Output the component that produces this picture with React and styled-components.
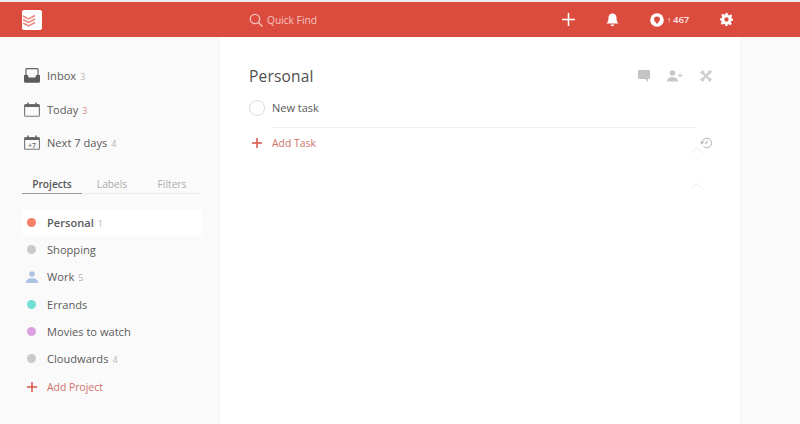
import React from 'react'
import styled, { createGlobalStyle } from 'styled-components'

const Global = createGlobalStyle`
  html, body { margin: 0; padding: 0; background: #fafafa; }
  body { font-family: "Open Sans", "Liberation Sans", sans-serif; color: #4a4a4a; }
`

const Page = styled.div`
  width: 800px;
  height: 424px;
  overflow: hidden;
  display: flex;
  flex-direction: column;
  background: #fafafa;
  border-top: 2px solid #ececec;
  box-sizing: border-box;
`

const TopBar = styled.header`
  height: 35px;
  flex: none;
  background: #db4c3f;
  display: flex;
  align-items: center;
`

const Logo = styled.div`
  width: 20px;
  height: 20px;
  margin-left: 22px;
  background: #fff;
  border-radius: 2px;
  display: flex;
  svg { display: block; }
`

const Search = styled.div`
  margin-left: 207px;
  display: flex;
  align-items: center;
  gap: 4px;
  color: #f6c4bf;
  font-size: 10.2px;
  width: 313px;
`

const HeaderIcons = styled.div`
  display: flex;
  align-items: center;
`

const HeaderSlot = styled.div`
  display: flex;
  align-items: center;
  width: ${p => p.$w}px;
  color: #fff;
`

const Karma = styled.span`
  font-size: 9.5px;
  font-weight: 600;
  color: #fbe7e5;
  margin-left: 3px;
  white-space: nowrap;
`

const KarmaArrow = styled.span`
  font-size: 8px;
  font-weight: 400;
  margin-right: 2px;
`

const Body = styled.div`
  flex: 1;
  display: flex;
  min-height: 0;
`

const Sidebar = styled.aside`
  width: 219px;
  flex: none;
  box-sizing: border-box;
  padding: 22px 17px 0 22px;
  background: #fafafa;
`

const FilterRow = styled.div`
  height: 33.5px;
  display: flex;
  align-items: center;
  font-size: 11.1px;
  color: #5a5a5a;
`

const IconBox = styled.span`
  width: 25px;
  flex: none;
  display: flex;
  padding-left: 2px;
  box-sizing: border-box;
  svg { display: block; }
`

const Count = styled.span`
  font-size: 9px;
  margin-left: 4px;
  margin-top: 2px;
  font-weight: 400;
  color: ${p => (p.$red ? '#d98a84' : '#b5b5b5')};
`

const Tabs = styled.div`
  display: flex;
  margin: 17px 0 15px;
  height: 16px;
  border-bottom: 1px solid #ececec;
`

const Tab = styled.div`
  width: 60px;
  font-size: 10.2px;
  line-height: 15px;
  text-align: center;
  color: ${p => (p.$active ? '#555' : '#aaa')};
  font-weight: ${p => (p.$active ? 600 : 400)};
  border-bottom: ${p => (p.$active ? '1px solid #999' : '0')};
  height: 16px;
`

const ProjectRow = styled.div`
  height: 27.3px;
  display: flex;
  align-items: center;
  font-size: 11.1px;
  color: #5a5a5a;
  border-radius: 3px;
  background: ${p => (p.$active ? '#fff' : 'transparent')};
  font-weight: ${p => (p.$active ? 600 : 400)};
`

const DotBox = styled.span`
  width: 25px;
  flex: none;
  display: flex;
  justify-content: center;
  padding-right: 6px;
  box-sizing: border-box;
`

const Dot = styled.span`
  width: 9px;
  height: 9px;
  border-radius: 50%;
  background: ${p => p.$color};
`

const AddLine = styled.div`
  height: 29px;
  display: flex;
  align-items: center;
  font-size: 10.4px;
  color: #d0716a;
`

const Main = styled.main`
  width: 521px;
  flex: none;
  background: #fff;
  box-sizing: border-box;
  padding: 27px 28px 0 29px;
  border-left: 1px solid #f1f1f1;
  position: relative;
`

const TitleRow = styled.div`
  display: flex;
  align-items: center;
  justify-content: space-between;
  height: 24px;
`

const Title = styled.h1`
  margin: 0;
  font-size: 15.5px;
  font-weight: 400;
  color: #4f4f4f;
  letter-spacing: 0.2px;
`

const TitleIcons = styled.div`
  display: flex;
  align-items: center;
  gap: 17px;
  svg { display: block; }
`

const TaskRow = styled.div`
  height: 39px;
  display: flex;
  align-items: center;
  font-size: 11px;
  color: #5a5a5a;
`

const Check = styled.span`
  width: 14px;
  height: 14px;
  border: 1px solid #dcdcdc;
  border-radius: 50%;
  margin-right: 7px;
  flex: none;
`

const Divider = styled.div`
  height: 1px;
  background: #f0f0f0;
  margin: 0 16px 0 23px;
`

const AddTaskRow = styled.div`
  height: 30px;
  display: flex;
  align-items: center;
  justify-content: space-between;
  font-size: 10.4px;
  color: #d0716a;
`

const AddLabel = styled.div`
  display: flex;
  align-items: center;
  svg { display: block; }
`

const PlusBox = styled.span`
  width: ${p => p.$w}px;
  padding-left: ${p => p.$pad}px;
  box-sizing: border-box;
  flex: none;
  display: flex;
`

const Chevron = styled.svg`
  position: absolute;
  left: 470px;
  top: ${p => p.$top}px;
`

const Rail = styled.div`
  flex: 1;
  background: #fafafa;
  border-left: 1px solid #f3f3f3;
`

const calendar = (
  <>
    <rect x=".6" y="2.5" width="14.8" height="11.8" rx="1" fill="none" stroke="#777" strokeWidth="1.1" />
    <path d="M.6 2.5h14.8v2.5H.6z" fill="#666" />
    <path d="M4 .5v3M12 .5v3" stroke="#666" strokeWidth="1.5" />
  </>
)

const filters = [
  {
    name: 'Inbox',
    count: 3,
    icon: (
      <svg width="16" height="15" viewBox="0 0 16 15">
        <path d="M2 7V1.200a.6.6 0 0 1 .6-.6h10.800a.6.6 0 0 1 .6.6V7" fill="none" stroke="#666" strokeWidth="1.2" />
        <path d="M0 7h3.500c.5 0 .8 2.500 1.500 2.500h6c.7 0 1-2.500 1.500-2.500H16v6.300a1.500 1.500 0 0 1-1.500 1.500h-13A1.500 1.500 0 0 1 0 13.300z" fill="#5c5c5c" />
      </svg>
    ),
  },
  {
    name: 'Today',
    count: 3,
    red: true,
    icon: <svg width="16" height="15" viewBox="0 0 16 15">{calendar}</svg>,
  },
  {
    name: 'Next 7 days',
    count: 4,
    icon: (
      <svg width="16" height="15" viewBox="0 0 16 15">
        {calendar}
        <text x="8" y="12.5" fontSize="7" fontWeight="600" textAnchor="middle" fill="#666">+7</text>
      </svg>
    ),
  },
]

const projects = [
  { name: 'Personal', color: '#f58069', count: 1, active: true },
  { name: 'Shopping', color: '#cacaca' },
  { name: 'Work', count: 5, person: true },
  { name: 'Errands', color: '#6fe0d2' },
  { name: 'Movies to watch', color: '#dc9fe0' },
  { name: 'Cloudwards', color: '#cacaca', count: 4 },
]

const Plus = ({ size = 10, color = '#d9534a', width = 1.5 }) => (
  <svg width={size} height={size} viewBox="0 0 10 10">
    <path d="M5 0v10M0 5h10" stroke={color} strokeWidth={width} />
  </svg>
)

const App = () => (
  <Page>
    <Global />
    <TopBar>
      <Logo>
        <svg width="20" height="20" viewBox="0 0 20 20">
          <g fill="none" stroke="#e9877d" strokeWidth="1.5">
            <path d="M1 6l5.500 3L13 5.500" />
            <path d="M1 9.500l5.500 3L13 9" />
            <path d="M1 13l5.500 3L13 12.500" />
          </g>
        </svg>
      </Logo>
      <Search>
        <svg width="14" height="14" viewBox="0 0 14 14">
          <circle cx="6" cy="6" r="4.7" fill="none" stroke="#f6c4bf" strokeWidth="1.3" />
          <path d="M9.500 9.500L13.500 13.500" stroke="#f6c4bf" strokeWidth="1.4" />
        </svg>
        Quick Find
      </Search>
      <HeaderIcons>
        <HeaderSlot $w={44}>
          <Plus size={13} color="#fff" width={1.2} />
        </HeaderSlot>
        <HeaderSlot $w={44}>
          <svg width="13" height="14" viewBox="0 0 13 14">
            <path d="M6.500 0.500c-2.500 0-4 1.800-4 4.200 0 3-.7 4.300-2 5.800h12c-1.300-1.500-2-2.800-2-5.800 0-2.400-1.500-4.200-4-4.200z" fill="#fff" />
            <path d="M4.700 11.500h3.600a1.800 1.800 0 0 1-3.600 0z" fill="#fff" />
          </svg>
        </HeaderSlot>
        <HeaderSlot $w={70}>
          <svg width="14" height="14" viewBox="0 0 14 14">
            <circle cx="7" cy="7" r="6.8" fill="#fff" />
            <path d="M7 3.500c1.800 0 3 1 3 2.600 0 1.500-1.600 3.200-3 4.900-1.400-1.700-3-3.400-3-4.900 0-1.600 1.200-2.600 3-2.600z" fill="#db4c3f" />
          </svg>
          <Karma><KarmaArrow>↑</KarmaArrow>467</Karma>
        </HeaderSlot>
        <HeaderSlot $w={20}>
          <svg width="13" height="13" viewBox="0 0 24 24">
            <path fill="#fff" fillRule="evenodd" d="M10 0h4l.7 3.400 2.300 1 2.900-1.900 2.800 2.800-1.900 2.900 1 2.300L24 10v4l-3.200.7-1 2.300 1.900 2.900-2.800 2.800-2.900-1.900-2.300 1L14 24h-4l-.7-3.200-2.300-1-2.900 1.900-2.800-2.800 1.900-2.900-1-2.300L0 14v-4l3.200-.7 1-2.300-1.900-2.900 2.800-2.800 2.900 1.900 2.300-1zM12 8a4 4 0 1 0 0 8 4 4 0 0 0 0-8z" />
          </svg>
        </HeaderSlot>
      </HeaderIcons>
    </TopBar>
    <Body>
      <Sidebar>
        {filters.map(f => (
          <FilterRow key={f.name}>
            <IconBox>{f.icon}</IconBox>
            {f.name}
            <Count $red={f.red}>{f.count}</Count>
          </FilterRow>
        ))}
        <Tabs>
          <Tab $active>Projects</Tab>
          <Tab>Labels</Tab>
          <Tab>Filters</Tab>
        </Tabs>
        {projects.map(p => (
          <ProjectRow key={p.name} $active={p.active}>
            <DotBox>
              {p.person ? (
                <svg width="12" height="12" viewBox="0 0 12 12">
                  <circle cx="6" cy="3" r="2.8" fill="#a9c4e2" />
                  <path d="M0 12c0-3 2-4.800 6-4.800s6 1.800 6 4.800z" fill="#a9c4e2" />
                </svg>
              ) : (
                <Dot $color={p.color} />
              )}
            </DotBox>
            {p.name}
            {p.count && <Count>{p.count}</Count>}
          </ProjectRow>
        ))}
        <AddLine>
          <PlusBox $w={25} $pad={5}>
            <Plus />
          </PlusBox>
          Add Project
        </AddLine>
      </Sidebar>
      <Main>
        <TitleRow>
          <Title>Personal</Title>
          <TitleIcons>
            <svg width="12" height="12" viewBox="0 0 12 12">
              <path d="M1 0h10a1 1 0 0 1 1 1v7a1 1 0 0 1-1 1h-1v3L7.500 9H1a1 1 0 0 1-1-1V1a1 1 0 0 1 1-1z" fill="#c4c4c4" />
            </svg>
            <svg width="16" height="12" viewBox="0 0 16 12">
              <circle cx="5.5" cy="3" r="2.8" fill="#c8c8c8" />
              <path d="M0 11.500c0-3 2-4.500 5.500-4.500S11 8.500 11 11.500z" fill="#c8c8c8" />
              <path d="M13 3v5M10.500 5.500h5" stroke="#c8c8c8" strokeWidth="1" />
            </svg>
            <svg width="12" height="12" viewBox="0 0 12 12">
              <path d="M2 2l8 8M10 2l-8 8" stroke="#cdcdcd" strokeWidth="2.2" />
              <path d="M0 2.500L2.500 0l2 2L2 4.500zM7.500 2L10 0l2 1.500-2 3zM0 9.500l2-2 2.500 2.500-2 2zM8 10l2-2.500 2 2L9.500 12z" fill="#cdcdcd" />
            </svg>
          </TitleIcons>
        </TitleRow>
        <TaskRow>
          <Check />
          New task
        </TaskRow>
        <Divider />
        <AddTaskRow>
          <AddLabel>
            <PlusBox $w={23} $pad={3}>
              <Plus />
            </PlusBox>
            Add Task
          </AddLabel>
          <svg width="13" height="12" viewBox="0 0 13 12">
            <path d="M3 6a4.800 4.800 0 1 1 1.500 3.500" fill="none" stroke="#b5b5b5" strokeWidth="1" />
            <path d="M0.800 4.800h4.200L3 7.500z" fill="#b5b5b5" />
            <path d="M8 3v3.200H5.800" fill="none" stroke="#b5b5b5" strokeWidth="1" />
          </svg>
        </AddTaskRow>
        <Chevron $top={110} width="14" height="7" viewBox="0 0 14 7">
          <path d="M0.500 6.500L7 .5l6.500 6" fill="none" stroke="#ececec" strokeWidth="1" />
        </Chevron>
        <Chevron $top={146} width="14" height="7" viewBox="0 0 14 7">
          <path d="M0.500 6.500L7 .5l6.500 6" fill="none" stroke="#ececec" strokeWidth="1" />
        </Chevron>
      </Main>
      <Rail />
    </Body>
  </Page>
)

export default App
